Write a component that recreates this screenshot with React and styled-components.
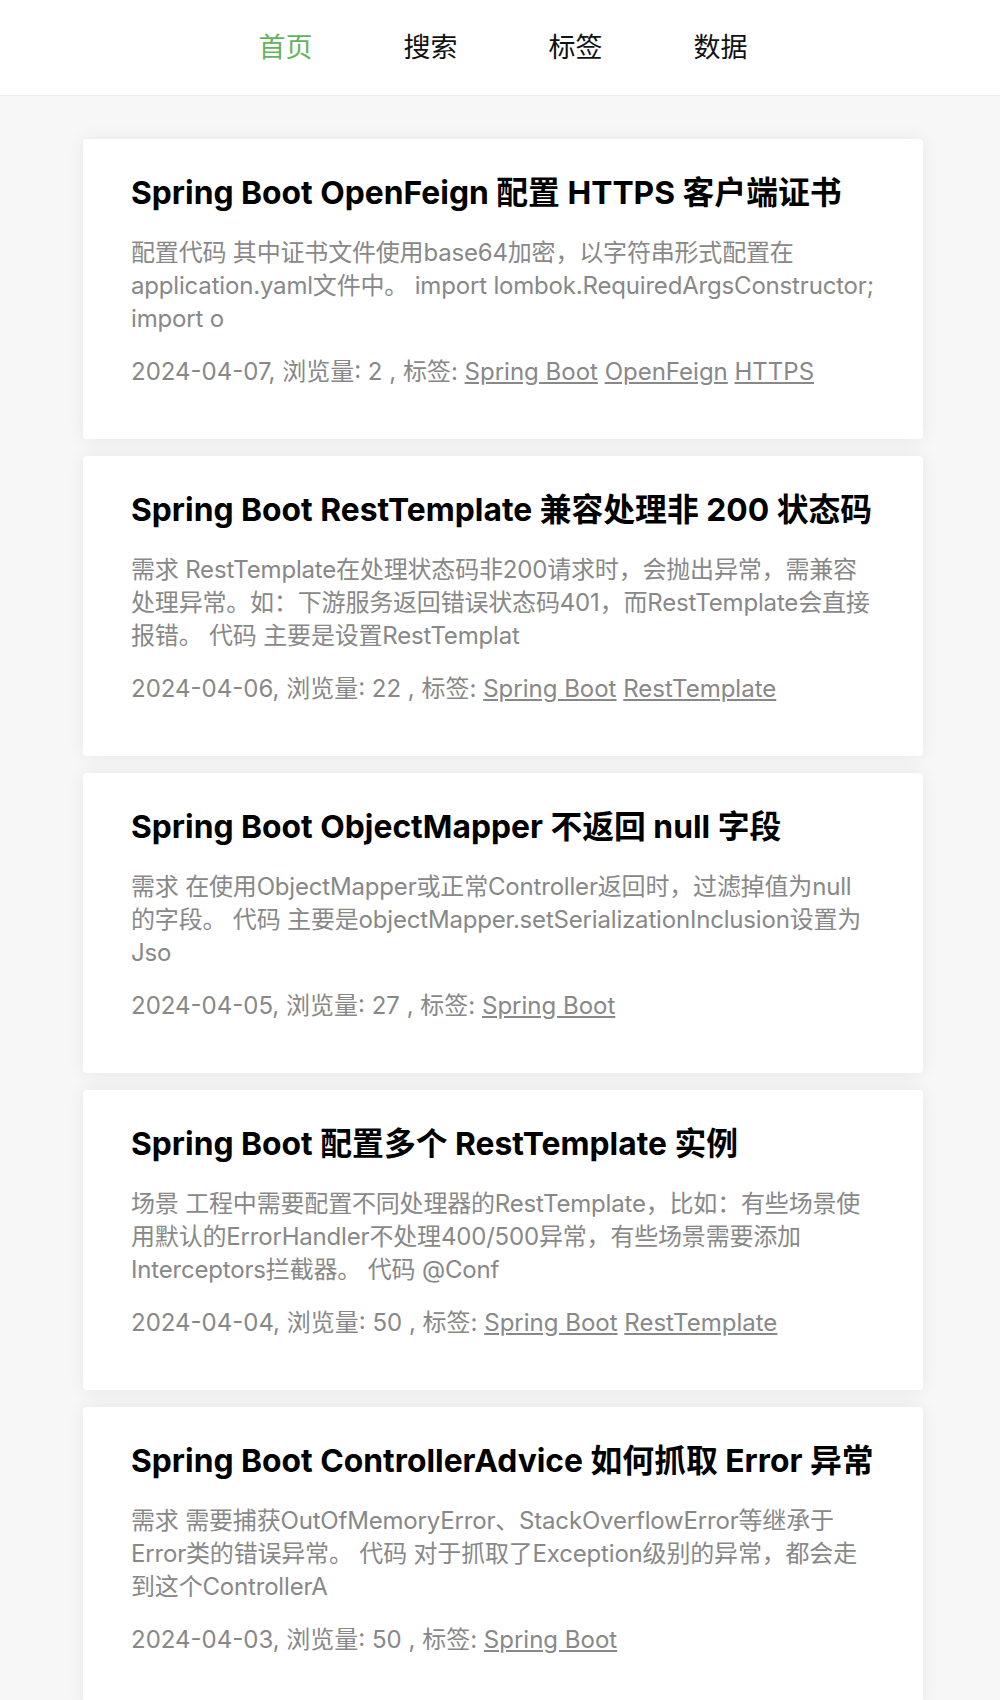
import React from "react";
import styled, { createGlobalStyle } from "styled-components";

const GlobalStyle = createGlobalStyle`
  html, body {
    margin: 0;
    padding: 0;
    background: #f7f7f7;
    font-family: Inter, "Noto Sans CJK SC", sans-serif;
  }
`;

const posts = [
  {
    title: "Spring Boot OpenFeign 配置 HTTPS 客户端证书",
    summary:
      "配置代码 其中证书文件使用base64加密，以字符串形式配置在application.yaml文件中。 import lombok.RequiredArgsConstructor; import o",
    date: "2024-04-07",
    views: 2,
    tags: ["Spring Boot", "OpenFeign", "HTTPS"],
  },
  {
    title: "Spring Boot RestTemplate 兼容处理非 200 状态码",
    summary:
      "需求 RestTemplate在处理状态码非200请求时，会抛出异常，需兼容处理异常。如：下游服务返回错误状态码401，而RestTemplate会直接报错。 代码 主要是设置RestTemplat",
    date: "2024-04-06",
    views: 22,
    tags: ["Spring Boot", "RestTemplate"],
  },
  {
    title: "Spring Boot ObjectMapper 不返回 null 字段",
    summary:
      "需求 在使用ObjectMapper或正常Controller返回时，过滤掉值为null的字段。 代码 主要是objectMapper.setSerializationInclusion设置为Jso",
    date: "2024-04-05",
    views: 27,
    tags: ["Spring Boot"],
  },
  {
    title: "Spring Boot 配置多个 RestTemplate 实例",
    summary:
      "场景 工程中需要配置不同处理器的RestTemplate，比如：有些场景使用默认的ErrorHandler不处理400/500异常，有些场景需要添加Interceptors拦截器。 代码 @Conf",
    date: "2024-04-04",
    views: 50,
    tags: ["Spring Boot", "RestTemplate"],
  },
  {
    title: "Spring Boot ControllerAdvice 如何抓取 Error 异常",
    summary:
      "需求 需要捕获OutOfMemoryError、StackOverflowError等继承于Error类的错误异常。 代码 对于抓取了Exception级别的异常，都会走到这个ControllerA",
    date: "2024-04-03",
    views: 50,
    tags: ["Spring Boot"],
  },
];

const navItems = ["首页", "搜索", "标签", "数据"];

function App() {
  return (
    <>
      <GlobalStyle />
      <Header>
        <Nav>
          {navItems.map((item, i) => (
            <NavLink key={item} href="#" $active={i === 0}>
              {item}
            </NavLink>
          ))}
        </Nav>
      </Header>
      <PostList>
        {posts.map((post) => (
          <Card key={post.date}>
            <Title>{post.title}</Title>
            <Summary>{post.summary}</Summary>
            <Meta>
              {post.date}, 浏览量: {post.views} , 标签:{" "}
              {post.tags.map((tag, i) => (
                <React.Fragment key={tag}>
                  {i > 0 && " "}
                  <Tag href="#">{tag}</Tag>
                </React.Fragment>
              ))}
            </Meta>
          </Card>
        ))}
      </PostList>
    </>
  );
}

const Header = styled.header`
  height: 95px;
  background: #fff;
  border-bottom: 1px solid #ececec;
  display: flex;
  align-items: center;
  justify-content: center;
  padding-left: 6px;
`;

const Nav = styled.nav`
  display: flex;
  gap: 91px;
`;

const NavLink = styled.a`
  font-size: 27px;
  line-height: 36px;
  text-decoration: none;
  color: ${(p) => (p.$active ? "#62b35e" : "#111")};
`;

const PostList = styled.main`
  display: flex;
  flex-direction: column;
  gap: 17px;
  width: 840px;
  margin: 43px 0 0 83px;
`;

const Card = styled.article`
  height: 300px;
  box-sizing: border-box;
  padding: 31px 48px 0;
  background: #fff;
  border-radius: 4px;
  box-shadow: 0 0 18px rgba(0, 0, 0, 0.07);
`;

const Title = styled.h2`
  margin: 0;
  font-size: 31.8px;
  line-height: 45px;
  font-weight: 700;
  color: #000;
  white-space: nowrap;
  overflow: hidden;
  text-overflow: ellipsis;
`;

const Summary = styled.p`
  margin: 21px 0 0;
  font-size: 24px;
  line-height: 33px;
  letter-spacing: -0.18px;
  color: #888;
`;

const Meta = styled.div`
  margin-top: 20px;
  font-size: 24px;
  line-height: 33px;
  color: #888;
`;

const Tag = styled.a`
  color: #888;
  text-decoration: underline;
`;

export default App;
